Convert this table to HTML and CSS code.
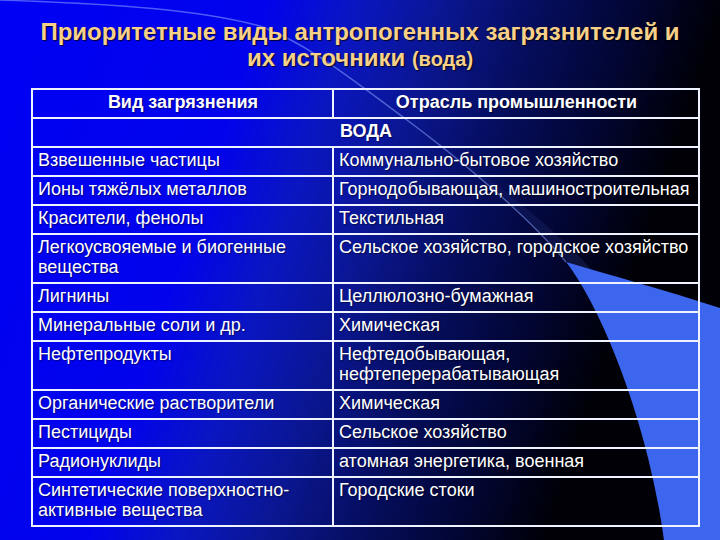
FILE: index.html
```html
<!DOCTYPE html>
<html lang="ru">
<head>
<meta charset="utf-8">
<title>Приоритетные виды антропогенных загрязнителей</title>
<link rel="stylesheet" href="styles.css">
</head>
<body>
<div class="slide">
  <svg class="backdrop" viewBox="0 0 720 540" preserveAspectRatio="none" aria-hidden="true">
    <defs>
      <linearGradient id="bg" x1="0" y1="0" x2="1" y2="0.25">
        <stop offset="0" stop-color="#0000f4"/>
        <stop offset="0.35" stop-color="#0203ec"/>
        <stop offset="0.47" stop-color="#0a16c0"/>
        <stop offset="0.59" stop-color="#0a168e"/>
        <stop offset="0.71" stop-color="#050d5c"/>
        <stop offset="0.84" stop-color="#020530"/>
        <stop offset="0.95" stop-color="#000006"/>
      </linearGradient>
      <linearGradient id="streak" x1="0" y1="0" x2="1" y2="1">
        <stop offset="0" stop-color="#7f9cff" stop-opacity="0"/>
        <stop offset="1" stop-color="#5577ff" stop-opacity="0.25"/>
      </linearGradient>
    </defs>
    <rect x="0" y="0" width="720" height="540" fill="url(#bg)"/>
    <path d="M420,130 C480,175 530,220 568,262 C598,300 648,420 664,540 L690,540 C680,440 640,330 600,280 C560,230 480,170 420,130 Z" fill="url(#streak)"/>
    <path d="M566,262 C600,305 648,420 664,540 L720,540 L720,308 C665,290 610,275 566,262 Z" fill="#3d66ee"/>
    <path d="M0,0 C120,4 200,10 260,26 C310,45 350,78 407,120 C450,152 525,212 566,262" fill="none" stroke="#8aa6ff" stroke-opacity="0.55" stroke-width="1.4"/>
  </svg>

  <h1 class="title">Приоритетные виды антропогенных загрязнителей и<br>их источники <span class="title-small">(вода)</span></h1>

  <table class="grid">
    <colgroup>
      <col class="col-kind">
      <col class="col-branch">
    </colgroup>
    <thead>
      <tr>
        <th>Вид загрязнения</th>
        <th>Отрасль промышленности</th>
      </tr>
    </thead>
    <tbody>
      <tr><th colspan="2" class="section">ВОДА</th></tr>
      <tr><td>Взвешенные частицы</td><td>Коммунально-бытовое хозяйство</td></tr>
      <tr><td>Ионы тяжёлых металлов</td><td>Горнодобывающая, машиностроительная</td></tr>
      <tr><td>Красители, фенолы</td><td>Текстильная</td></tr>
      <tr><td>Легкоусвояемые и биогенные<br>вещества</td><td>Сельское хозяйство, городское хозяйство</td></tr>
      <tr><td>Лигнины</td><td>Целлюлозно-бумажная</td></tr>
      <tr><td>Минеральные соли и др.</td><td>Химическая</td></tr>
      <tr><td>Нефтепродукты</td><td>Нефтедобывающая,<br>нефтеперерабатывающая</td></tr>
      <tr><td>Органические растворители</td><td>Химическая</td></tr>
      <tr><td>Пестициды</td><td>Сельское хозяйство</td></tr>
      <tr><td>Радионуклиды</td><td>атомная энергетика, военная</td></tr>
      <tr><td>Синтетические поверхностно-<br>активные вещества</td><td>Городские стоки</td></tr>
    </tbody>
  </table>
</div>
</body>
</html>
```

FILE: styles.css
```css
html, body {
  margin: 0;
  padding: 0;
  background: #000;
}

.slide {
  position: relative;
  width: 720px;
  height: 540px;
  overflow: hidden;
  font-family: "Liberation Sans", Arial, sans-serif;
  color: #ffffff;
  display: flex;
  flex-direction: column;
  align-items: flex-start;
}

.backdrop {
  position: absolute;
  left: 0;
  top: 0;
  width: 720px;
  height: 540px;
  z-index: 0;
}

.title {
  position: relative;
  z-index: 1;
  align-self: stretch;
  margin: 19px 0 0 0;
  font-size: 24px;
  line-height: 26px;
  font-weight: bold;
  text-align: center;
  color: #f7d08a;
  text-shadow: 1px 1px 1px rgba(0, 0, 0, 0.8);
}

.title-small {
  font-size: 20px;
}

.grid {
  position: relative;
  z-index: 1;
  margin: 16px 0 0 31px;
  width: 669px;
  border-collapse: collapse;
  table-layout: fixed;
  font-size: 18px;
  line-height: 20px;
  text-shadow: 1px 1px 1px rgba(0, 0, 0, 0.45);
}

.col-kind {
  width: 301px;
}

.grid th,
.grid td {
  border: 2px solid #eef3ff;
  padding: 2px 4px 5px 5px;
  vertical-align: top;
  white-space: nowrap;
  text-align: left;
  font-weight: normal;
}

.grid thead th {
  text-align: center;
  font-weight: bold;
}

.grid .section {
  text-align: center;
  font-weight: bold;
}
```
